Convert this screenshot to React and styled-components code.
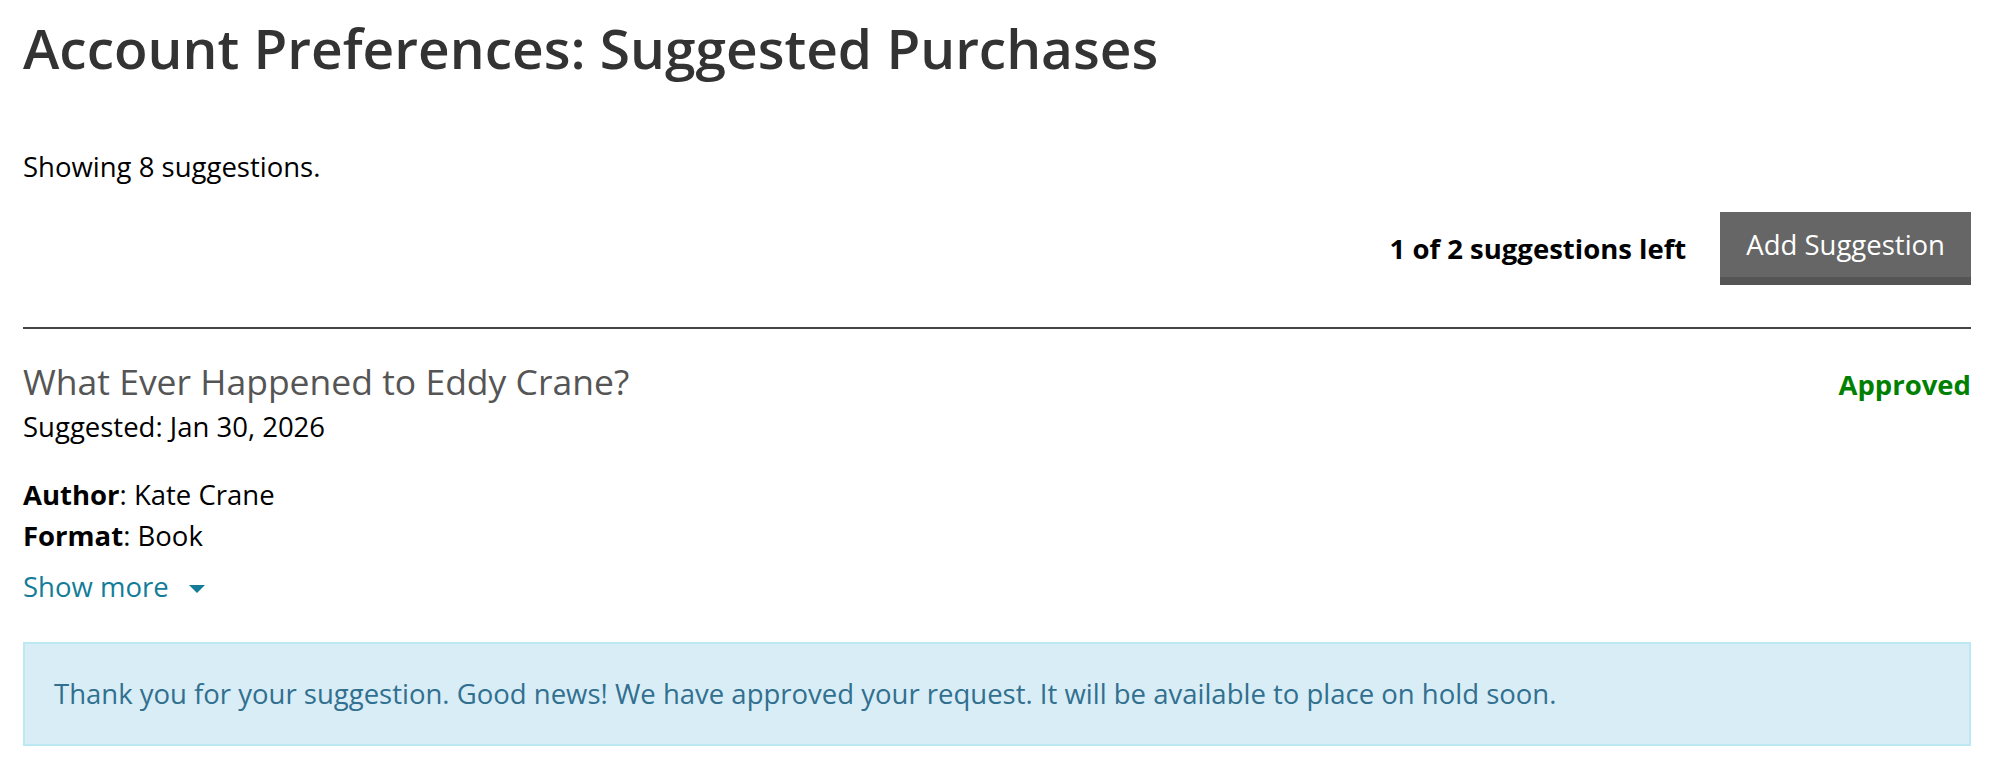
import React from "react";
import styled, { createGlobalStyle } from "styled-components";

const GlobalStyle = createGlobalStyle`
  html, body {
    margin: 0;
    padding: 0;
    background: #fff;
  }
  body {
    font-family: "Open Sans", "Noto Sans", sans-serif;
    font-size: 27.5px;
    line-height: 1.5;
    color: #000;
  }
`;

const Page = styled.main`
  padding: 0 29px 0 23px;
`;

const Heading = styled.h1`
  margin: 18px 0 0;
  font-size: 55px;
  font-weight: 600;
  line-height: 1.1;
  color: #333;
`;

const Summary = styled.p`
  margin: 67px 0 0;
`;

const Actions = styled.div`
  display: flex;
  justify-content: flex-end;
  align-items: center;
  gap: 34px;
  margin-top: 25px;
`;

const Remaining = styled.span`
  font-weight: 700;
`;

const AddButton = styled.button`
  font-family: inherit;
  font-size: 27.5px;
  color: #fff;
  background: #666;
  border: 0;
  border-bottom: 8px solid #555;
  height: 73px;
  padding: 0 26px;
  cursor: pointer;
`;

const Divider = styled.hr`
  margin: 42px 0 0;
  border: 0;
  border-top: 2px solid #444;
`;

const Suggestion = styled.article`
  padding-top: 28px;
`;

const TitleRow = styled.div`
  display: flex;
  justify-content: space-between;
  align-items: baseline;
`;

const Title = styled.h2`
  margin: 0;
  font-size: 35.5px;
  font-weight: 400;
  line-height: 1.4;
  color: #555;
`;

const Status = styled.span`
  font-weight: 700;
  color: ${(p) => p.color || "#008000"};
`;

const Details = styled.div`
  margin-top: 26px;
`;

const Field = styled.div`
  b {
    font-weight: 700;
  }
`;

const ShowMore = styled.button`
  display: flex;
  align-items: center;
  gap: 20px;
  margin-top: 10px;
  padding: 0;
  border: 0;
  background: none;
  font-family: inherit;
  font-size: 27.5px;
  line-height: 1.5;
  color: #137c98;
  cursor: pointer;
`;

const Caret = styled.span`
  width: 0;
  height: 0;
  border-left: 8px solid transparent;
  border-right: 8px solid transparent;
  border-top: 8px solid #137c98;
  margin-top: 4px;
`;

const Alert = styled.div`
  margin-top: 35px;
  padding: 29px 29px;
  background: #d9edf7;
  border: 2px solid #bce8f1;
  color: #31708f;
`;

export default function App() {
  return (
    <>
      <GlobalStyle />
      <Page>
        <Heading>Account Preferences: Suggested Purchases</Heading>
        <Summary>Showing 8 suggestions.</Summary>
        <Actions>
          <Remaining>1 of 2 suggestions left</Remaining>
          <AddButton>Add Suggestion</AddButton>
        </Actions>
        <Divider />
        <Suggestion>
          <TitleRow>
            <Title>What Ever Happened to Eddy Crane?</Title>
            <Status>Approved</Status>
          </TitleRow>
          <div>Suggested: Jan 30, 2026</div>
          <Details>
            <Field>
              <b>Author</b>: Kate Crane
            </Field>
            <Field>
              <b>Format</b>: Book
            </Field>
          </Details>
          <ShowMore>
            Show more <Caret />
          </ShowMore>
          <Alert>
            Thank you for your suggestion. Good news! We have approved your
            request. It will be available to place on hold soon.
          </Alert>
        </Suggestion>
      </Page>
    </>
  );
}
